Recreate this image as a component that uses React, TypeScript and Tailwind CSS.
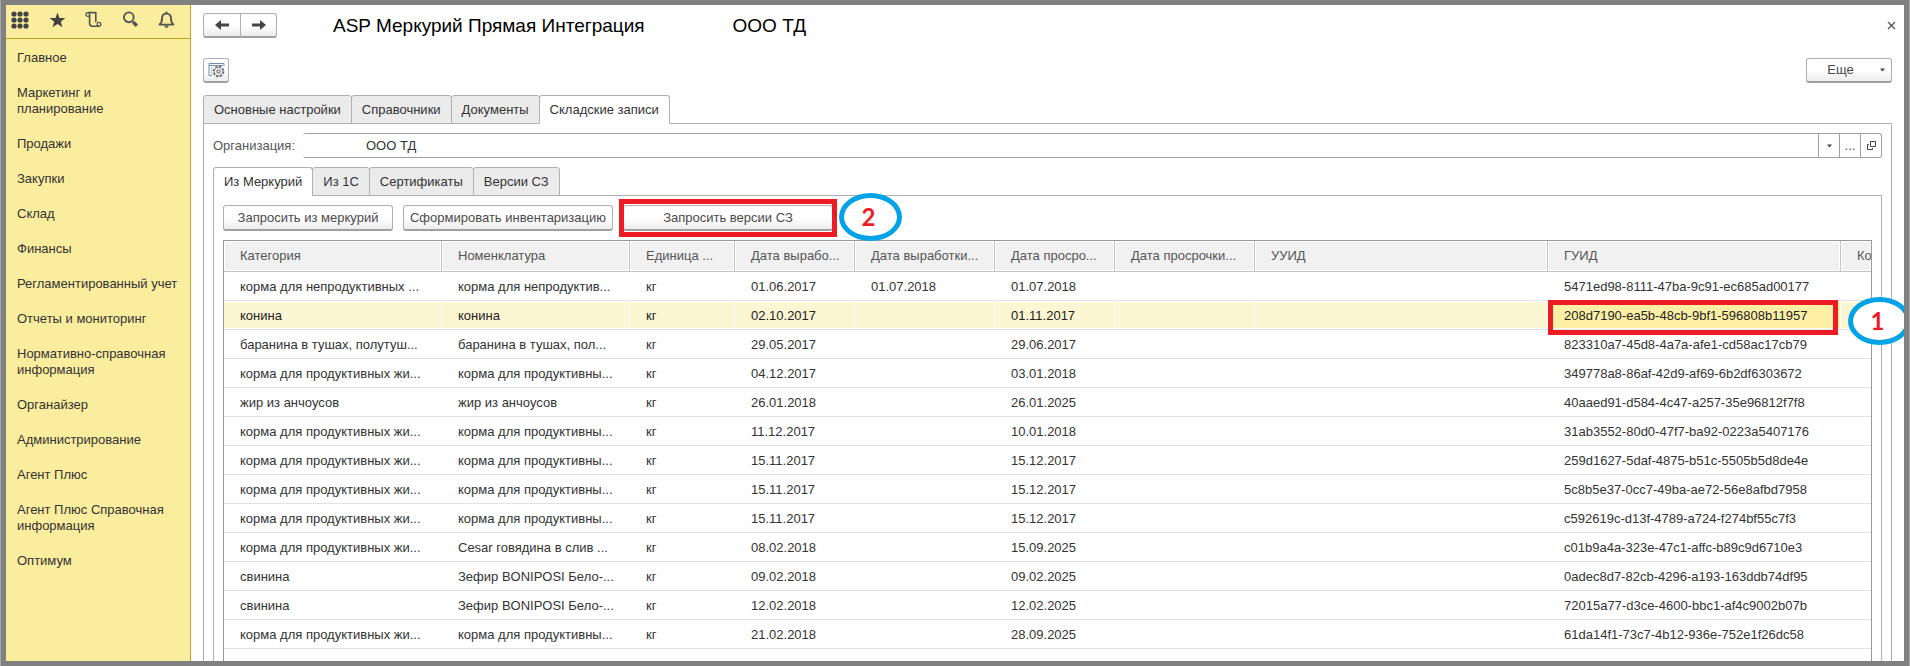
import React from "react";

const menu = [
  "Главное",
  "Маркетинг и\nпланирование",
  "Продажи",
  "Закупки",
  "Склад",
  "Финансы",
  "Регламентированный учет",
  "Отчеты и мониторинг",
  "Нормативно-справочная\nинформация",
  "Органайзер",
  "Администрирование",
  "Агент Плюс",
  "Агент Плюс Справочная\nинформация",
  "Оптимум",
];

const columns = [
  { title: "Категория", width: "w-[218px]" },
  { title: "Номенклатура", width: "w-[188px]" },
  { title: "Единица ...", width: "w-[105px]" },
  { title: "Дата вырабо...", width: "w-[120px]" },
  { title: "Дата выработки...", width: "w-[140px]" },
  { title: "Дата просро...", width: "w-[120px]" },
  { title: "Дата просрочки...", width: "w-[140px]" },
  { title: "УУИД", width: "" },
  { title: "ГУИД", width: "w-[293px]" },
  { title: "Ко", width: "w-[30px]" },
];

const feed = "корма для продуктивных жи...";
const feedShort = "корма для продуктивны...";

const rows = [
  ["корма для непродуктивных ...", "корма для непродуктив...", "кг", "01.06.2017", "01.07.2018", "01.07.2018", "5471ed98-8111-47ba-9c91-ec685ad00177"],
  ["конина", "конина", "кг", "02.10.2017", "", "01.11.2017", "208d7190-ea5b-48cb-9bf1-596808b11957"],
  ["баранина в тушах, полутуш...", "баранина в тушах, пол...", "кг", "29.05.2017", "", "29.06.2017", "823310a7-45d8-4a7a-afe1-cd58ac17cb79"],
  [feed, feedShort, "кг", "04.12.2017", "", "03.01.2018", "349778a8-86af-42d9-af69-6b2df6303672"],
  ["жир из анчоусов", "жир из анчоусов", "кг", "26.01.2018", "", "26.01.2025", "40aaed91-d584-4c47-a257-35e96812f7f8"],
  [feed, feedShort, "кг", "11.12.2017", "", "10.01.2018", "31ab3552-80d0-47f7-ba92-0223a5407176"],
  [feed, feedShort, "кг", "15.11.2017", "", "15.12.2017", "259d1627-5daf-4875-b51c-5505b5d8de4e"],
  [feed, feedShort, "кг", "15.11.2017", "", "15.12.2017", "5c8b5e37-0cc7-49ba-ae72-56e8afbd7958"],
  [feed, feedShort, "кг", "15.11.2017", "", "15.12.2017", "c592619c-d13f-4789-a724-f274bf55c7f3"],
  [feed, "Cesar говядина в слив ...", "кг", "08.02.2018", "", "15.09.2025", "c01b9a4a-323e-47c1-affc-b89c9d6710e3"],
  ["свинина", "Зефир BONIPOSI Бело-...", "кг", "09.02.2018", "", "09.02.2025", "0adec8d7-82cb-4296-a193-163ddb74df95"],
  ["свинина", "Зефир BONIPOSI Бело-...", "кг", "12.02.2018", "", "12.02.2025", "72015a77-d3ce-4600-bbc1-af4c9002b07b"],
  [feed, feedShort, "кг", "21.02.2018", "", "28.09.2025", "61da14f1-73c7-4b12-936e-752e1f26dc58"],
];

const buttonLook =
  "flex items-center justify-center rounded-[3px] border border-[#b0b0b0] border-b-2 border-b-[#a0a0a0] bg-linear-to-b from-white from-50% to-[#ececec] text-[#4a4a4a]";

function Tabs({ items, active }: { items: string[]; active: number }) {
  return (
    <div role="tablist" className="relative z-10 -mb-px flex">
      {items.map((t, i) => (
        <button
          key={t}
          role="tab"
          aria-selected={i === active}
          className={
            "-mr-px h-[29px] rounded-t-[3px] border border-[#b0b0b0] px-2.5 whitespace-nowrap text-[#333] " +
            (i === active ? "border-b-white bg-white" : "bg-[#ebebeb]")
          }
        >
          {t}
        </button>
      ))}
    </div>
  );
}

function Marker({ n }: { n: number }) {
  return (
    <span className="flex h-12 w-[63px] items-center justify-center rounded-[50%] border-[5px] border-[#00a2e8] bg-white pr-1 font-[Lato,sans-serif] text-2xl font-bold text-[#ed1c24]">
      {n}
    </span>
  );
}

function Caret() {
  return (
    <svg width="5" height="4" viewBox="0 0 5 4" fill="#444" aria-hidden="true">
      <path d="M0 0.5h5L2.5 3.5z" />
    </svg>
  );
}

function Arrow({ flip }: { flip?: boolean }) {
  return (
    <svg width="16" height="12" viewBox="0 0 16 12" className={flip ? "-scale-x-100" : ""} aria-hidden="true">
      <path d="M1 6 7 1v3.6h8v2.8H7V11z" fill="#444" />
    </svg>
  );
}

function SidebarTools() {
  const dots = [3, 9, 15];
  return (
    <div className="flex h-[34px] items-start justify-between border-b border-[#bfa51c] pt-1.5 pr-[15px] pl-[5px]">
      <button aria-label="Меню">
        <svg width="18" height="18" viewBox="0 0 18 18" fill="#444">
          {dots.map((y) => dots.map((x) => <circle key={x + "-" + y} cx={x} cy={y} r="2.6" />))}
        </svg>
      </button>
      <button aria-label="Избранное">
        <svg width="17" height="18" viewBox="0 0 17 18" fill="#444">
          <path d="M8.5 1.5l2 5.4 5.9.2-4.6 3.6 1.6 5.6-4.9-3.2-4.9 3.2 1.6-5.6L.6 7.1l5.9-.2z" />
        </svg>
      </button>
      <button aria-label="История">
        <svg width="17" height="18" viewBox="0 0 17 18" fill="none" stroke="#555" strokeWidth="1.6">
          <path d="M2.8 1.6h8v9.6" />
          <circle cx="2.8" cy="3.5" r="1.9" strokeWidth="1.3" />
          <path d="M4.6 4v8.6a2.6 2.6 0 0 0 2.6 2.6H14" />
          <circle cx="14" cy="13.2" r="1.9" strokeWidth="1.3" />
        </svg>
      </button>
      <button aria-label="Поиск">
        <svg width="17" height="18" viewBox="0 0 17 18" fill="none" stroke="#555">
          <circle cx="6.8" cy="6.3" r="4.9" strokeWidth="1.9" />
          <path d="M10 10l2 2" strokeWidth="1.5" />
          <path d="M11.3 11.3l3.6 3.4" strokeWidth="3.6" />
        </svg>
      </button>
      <button aria-label="Уведомления">
        <svg width="17" height="18" viewBox="0 0 17 18" fill="none" stroke="#555" strokeWidth="1.9">
          <path d="M1.6 13.6h13.8c-1.9-1.6-2.4-2.600-2.400-6.100C13 4.500 11.500 2.600 8.500 2.600S4 4.500 4 7.500c0 3.500-.5 4.500-2.400 6.100z" strokeLinejoin="round" />
          <path d="M8.500.6v2" strokeWidth="2" />
          <path d="M6.800 15.600h3.400" strokeWidth="2" />
        </svg>
      </button>
    </div>
  );
}

export default function App() {
  return (
    <div className="border-x border-[#a8a8a8]">
      <div className="flex h-screen overflow-hidden border-5 border-[#808080] bg-white font-['Liberation_Sans',Arial,sans-serif] text-[13px] leading-4">
        <aside className="w-[185px] shrink-0 border-r border-[#bfa51c] bg-[#fbed9e]">
          <SidebarTools />
          <nav className="flex flex-col gap-[19px] pt-[11px] pl-[11px] text-[#333]">
            {menu.map((m) => (
              <a key={m} href="#" className="block whitespace-pre-line">
                {m}
              </a>
            ))}
          </nav>
        </aside>

        <main className="flex min-w-0 flex-1 flex-col px-3 pt-2">
          <header className="flex h-[25px] items-center">
            <div className="flex">
              <button aria-label="Назад" className={buttonLook + " h-[25px] w-[38px] rounded-r-none"}>
                <Arrow />
              </button>
              <button aria-label="Вперед" className={buttonLook + " -ml-px h-[25px] w-[37px] rounded-l-none"}>
                <Arrow flip />
              </button>
            </div>
            <h1 className="ml-14 flex gap-[88px] text-[19px] whitespace-nowrap text-black">
              <span>ASP Меркурий Прямая Интеграция</span>
              <span>ООО ТД</span>
            </h1>
            <button aria-label="Закрыть" className="-mr-1 ml-auto">
              <svg width="9" height="9" viewBox="0 0 9 9" stroke="#555" strokeWidth="1.3">
                <path d="M1 1l7 7M8 1L1 8" />
              </svg>
            </button>
          </header>

          <div className="mt-5 flex justify-between">
            <button aria-label="Настройки" className={buttonLook + " h-[25px] w-[26px]"}>
              <svg width="17" height="16" viewBox="0 0 17 16" fill="none">
                <path d="M1 13.5V1.5h15V4M1 3.500h14M5 2V1M10 2V1M1 13.500h3" stroke="#6f8fb5" />
                <path d="M3 6h1M3 8.500h1M3 11h1" stroke="#6f8fb5" />
                <circle cx="10.500" cy="9.500" r="5" fill="#fff" stroke="#747a80" strokeWidth="1.800" strokeDasharray="2.400 1.500" />
                <circle cx="10.500" cy="9.500" r="4.200" stroke="#747a80" />
                <circle cx="10.500" cy="9.500" r="1.600" stroke="#747a80" strokeWidth="1.300" />
              </svg>
            </button>
            <button className={buttonLook + " h-[25px] w-[86px] gap-[26px] pl-3.5"}>
              <span>Еще</span>
              <Caret />
            </button>
          </div>

          <section className="mt-3 flex min-h-0 flex-1 flex-col">
            <Tabs items={["Основные настройки", "Справочники", "Документы", "Складские записи"]} active={3} />
            <div className="flex min-h-0 flex-1 flex-col border border-b-0 border-[#b0b0b0] px-[9px] pt-[9px]">
              <div className="flex h-[25px] items-center">
                <label htmlFor="org" className="w-[90px] text-[#555]">
                  Организация:
                </label>
                <div className="flex h-full flex-1 rounded-[3px] border border-l-0 border-[#a0a0a0]">
                  <input id="org" defaultValue="ООО ТД" className="min-w-0 flex-1 bg-transparent pl-[63px] text-[#333] outline-none" />
                  <button aria-label="Выбрать" className="flex w-[21px] items-center justify-center border-l border-[#a0a0a0]">
                    <Caret />
                  </button>
                  <button aria-label="Показать все" className="w-[21px] border-l border-[#a0a0a0] text-[#444]">
                    ...
                  </button>
                  <button aria-label="Открыть" className="flex w-[21px] items-center justify-center border-l border-[#a0a0a0]">
                    <svg width="9" height="9" viewBox="0 0 9 9" fill="none" stroke="#444">
                      <path d="M3.5.5h5v5h-5zM2 3.500H.5v5h5V7" />
                    </svg>
                  </button>
                </div>
              </div>

              <div className="mt-[9px] flex min-h-0 flex-1 flex-col">
                <Tabs items={["Из Меркурий", "Из 1С", "Сертификаты", "Версии СЗ"]} active={0} />
                <div className="flex min-h-0 flex-1 flex-col border border-b-0 border-[#b0b0b0] px-[9px] pt-[9px]">
                  <div className="flex gap-2.5">
                    <button className={buttonLook + " h-[26px] w-[170px]"}>Запросить из меркурий</button>
                    <button className={buttonLook + " h-[26px] w-[210px]"}>Сформировать инвентаризацию</button>
                    <div className="relative">
                      <button className={buttonLook + " h-[26px] w-[210px]"}>Запросить версии СЗ</button>
                      <span className="pointer-events-none absolute -inset-x-1 -inset-y-1.5 border-[5px] border-[#ed1c24]" />
                      <span className="absolute -top-3 left-[216px] z-10">
                        <Marker n={2} />
                      </span>
                    </div>
                  </div>

                  <div className="mt-[9px] min-h-0 flex-1 border border-b-0 border-[#999]">
                    <table className="w-full table-fixed border-separate border-spacing-0 text-left">
                      <thead>
                        <tr>
                          {columns.map((c, i) => (
                            <th
                              key={c.title}
                              className={
                                "h-[31px] overflow-hidden border-b border-[#c4c4c4] p-px font-normal whitespace-nowrap text-[#555] " +
                                (i < 9 ? "border-r " : "") +
                                c.width
                              }
                            >
                              <div className="flex h-[28px] items-center bg-[#f1f1f1] pl-[15px]">{c.title}</div>
                            </th>
                          ))}
                        </tr>
                      </thead>
                      <tbody>
                        {rows.map((r, ri) => {
                          const cells = [...r.slice(0, 6), "", "", r[6], ""];
                          const selected = ri === 1;
                          return (
                            <tr key={r[6]}>
                              {cells.map((c, ci) => (
                                <td
                                  key={ci}
                                  className={
                                    "relative h-[29px] border-b border-[#e2e2e2] py-px whitespace-nowrap " +
                                    (selected ? "text-[#222]" : "text-[#333]")
                                  }
                                >
                                  <div
                                    className={
                                      "flex h-[26px] items-center pt-0.5 pl-4 " +
                                      (selected ? (ci === 8 ? "mr-px bg-[#fdf0a5]" : "mr-px bg-[#fdf6d3]") : "")
                                    }
                                  >
                                    {c}
                                  </div>
                                  {selected && ci === 8 && (
                                    <span className="pointer-events-none absolute -top-px right-[3px] -bottom-1.5 left-0 border-[5px] border-[#ed1c24]" />
                                  )}
                                  {selected && ci === 9 && (
                                    <span className="absolute -top-1 left-[7px] z-20">
                                      <Marker n={1} />
                                    </span>
                                  )}
                                </td>
                              ))}
                            </tr>
                          );
                        })}
                      </tbody>
                    </table>
                  </div>
                </div>
              </div>
            </div>
          </section>
        </main>
      </div>
    </div>
  );
}
